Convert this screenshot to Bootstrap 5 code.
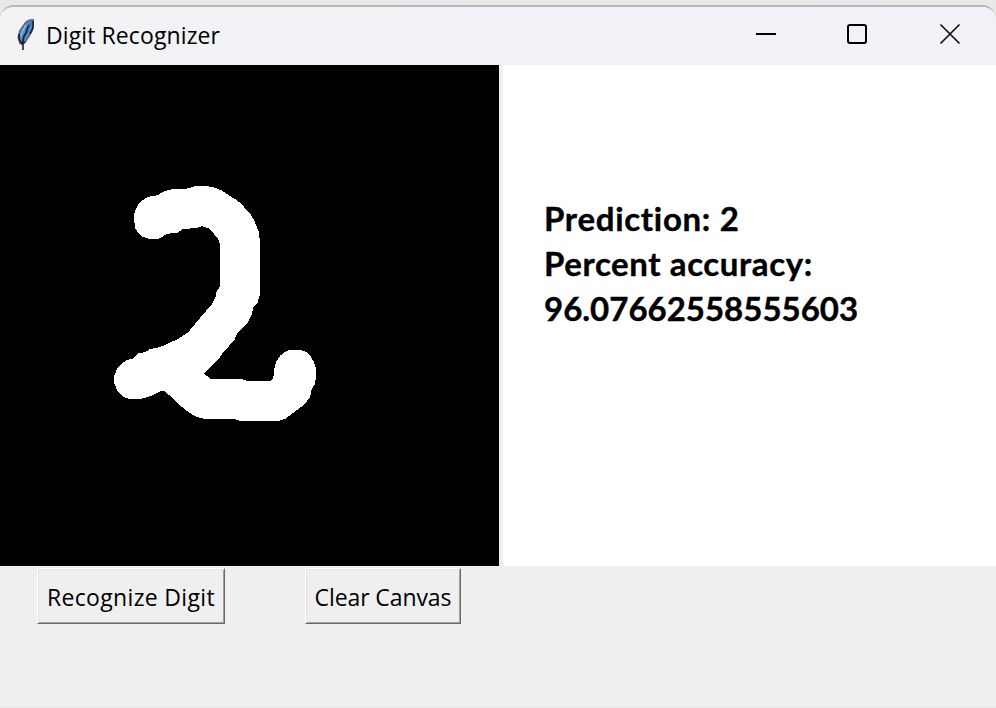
<!DOCTYPE html>
<html lang="en">
<head>
<meta charset="utf-8">
<meta name="viewport" content="width=device-width, initial-scale=1">
<title>Digit Recognizer</title>
<link href="https://cdn.jsdelivr.net/npm/bootstrap@5.3.0/dist/css/bootstrap.min.css" rel="stylesheet">
<style>
body{background:#e8e8e8;font-family:"Open Sans","Noto Sans",sans-serif;color:#000;overflow:hidden}
.app-window{height:702px;margin-top:5px;background:#efefef;border-top:2px solid #b7b7b7;border-radius:14px 14px 0 0;overflow:hidden}
.title-bar{height:58px;background:linear-gradient(90deg,#f3f3f5,#f0f2f7 50%,#f2f1f7);border-bottom:1px solid #efeff1;padding-left:15px}
.app-icon{margin-bottom:4px}
.app-name{font-size:23px;line-height:30px;margin:0 0 2px 10px;letter-spacing:.1px}
.window-controls{margin:0 34px 4px 0;gap:69px}
.window-controls button{width:24px;height:24px;line-height:0}
.drawing{width:499px;height:501px;background:#000}
.result{height:501px;background:#fff;margin-left:4px;padding:131px 0 0 41px;font:700 33px/45px Lato,"Liberation Sans",sans-serif;font-variant-ligatures:none;-webkit-text-stroke:.4px #000}
.line-one{letter-spacing:.7px}
.line-two{letter-spacing:.6px}
.actions{padding:2px 0 0 37px;gap:80px}
.tk-button{height:56px;background:#efefef;color:#000;font-size:23px;line-height:30px;border:1px solid;border-color:#fff #696969 #696969 #fff;box-shadow:inset 1px 1px #e3e3e3,inset -1px -1px #a0a0a0}
.tk-button.recognize{width:188px;letter-spacing:.33px;padding:2px 0 0}
.tk-button.clear{width:156px;letter-spacing:-.1px;padding:2px 0 0}
</style>
</head>
<body>
<main class="app-window">
  <header class="title-bar d-flex align-items-center">
    <svg class="app-icon" width="21" height="34" viewBox="0 0 21 34" aria-hidden="true">
      <path d="M18 3Q12 3 9 8L5 14L3.500 20L5 26L10 25L14 19L17 13Z" fill="#4b8fd8" stroke="#686c72" stroke-width="2"/>
      <path d="M17 4L14 9L13 14L10 18L8 24" fill="none" stroke="#3276c5" stroke-width="2"/>
      <path d="M14 8L12 12L11 16L9 19L8 23V33M4 17V22L7 27L10 25M18 4V11L15 17" fill="none" stroke="#1c2026" stroke-width="1.600"/>
      <path d="M11 8L8 13L6 19" fill="none" stroke="#7db6ee" stroke-width="1.500"/>
    </svg>
    <span class="app-name">Digit Recognizer</span>
    <div class="window-controls d-flex ms-auto">
      <button class="btn p-0 border-0" aria-label="Minimize"><svg width="24" height="24"><path d="M4 12H24" stroke="#000" stroke-width="2"/></svg></button>
      <button class="btn p-0 border-0" aria-label="Maximize"><svg width="24" height="24"><rect x="3" y="3" width="18" height="18" rx="2" fill="none" stroke="#000" stroke-width="2"/></svg></button>
      <button class="btn p-0 border-0" aria-label="Close"><svg width="24" height="24"><path d="M2.500 2.500L21.500 21.500M21.500 2.500L2.500 21.500" stroke="#111" stroke-width="1.700"/></svg></button>
    </div>
  </header>
  <section class="d-flex">
    <svg class="drawing flex-shrink-0" viewBox="0 0 499 501" role="img" aria-label="Drawing canvas">
      <path transform="translate(100 105) scale(.33333)" shape-rendering="crispEdges" fill="#fff" d="M102 150V136L106 121L113 106L124 94L138 84L150 79L172 76L190 65L214 58L260 56L280 50L302 47L326 49L348 54L364 61L384 74L412 92L430 107L436 118L452 134L462 150L469 168L476 184L480 214V374L476 386L472 401L460 413L455 434L442 459L411 492L403 510L370 547L353 571L312 611L332 627H424L442 633H510L518 627L522 615L524 590L530 573L540 558L552 547L568 540H600L618 546L632 560L642 576L648 597V622L644 643L634 661L630 682L612 704L585 725L556 746L538 752H420L406 748H318L286 739L258 721L232 699L207 675L192 662H184L150 679L122 687H88L72 682L54 665L43 642V616L51 597L66 580L81 570L98 566L116 550L136 546L151 537L181 531L236 506L264 487L285 462L336 402L347 380L350 364L360 350V224L354 207L340 189L324 174L306 169L294 173L248 178L232 188L199 192L181 205L165 207L144 206L127 200L115 190L106 175Z"/>
    </svg>
    <div class="result flex-grow-1">
      <div class="line-one">Prediction: 2</div>
      <div class="line-two">Percent accuracy:</div>
      <div class="line-three">96.07662558555603</div>
    </div>
  </section>
  <footer class="actions d-flex">
    <button class="tk-button recognize text-nowrap">Recognize Digit</button>
    <button class="tk-button clear text-nowrap">Clear Canvas</button>
  </footer>
</main>
<script src="https://cdn.jsdelivr.net/npm/bootstrap@5.3.0/dist/js/bootstrap.bundle.min.js"></script>
</body>
</html>
